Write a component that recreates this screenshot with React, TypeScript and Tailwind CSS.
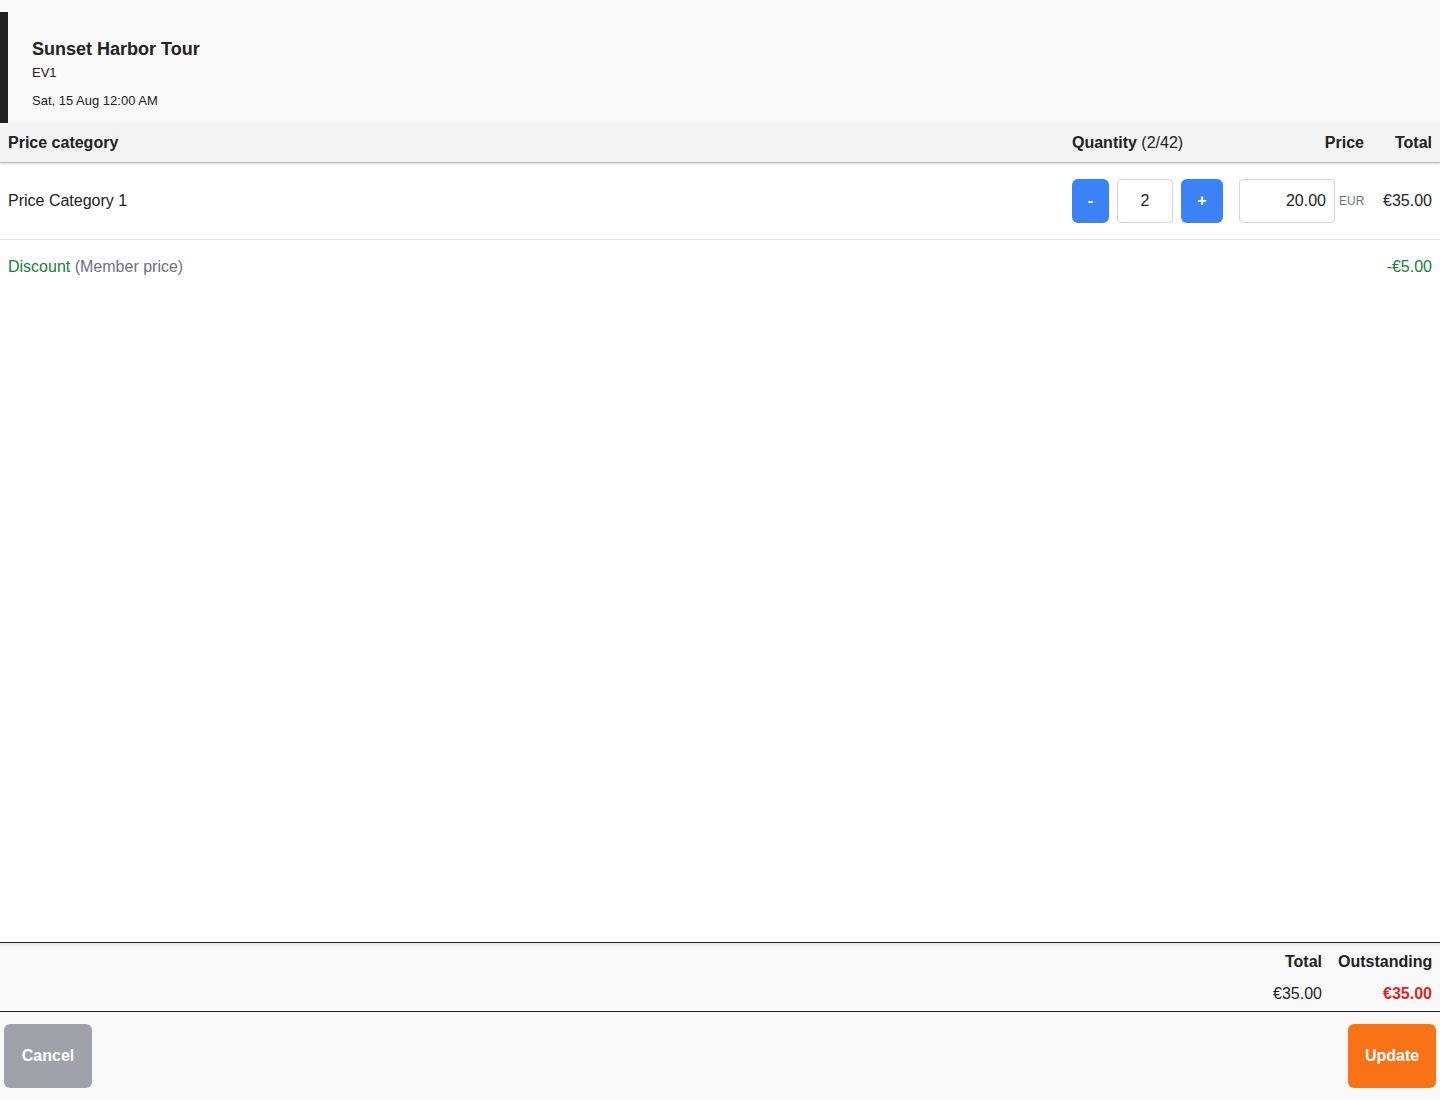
import { useState } from "react"

const font = { fontFamily: '"Liberation Sans", Arial, sans-serif' }

export default function App() {
  const [qty, setQty] = useState(2)
  const [price, setPrice] = useState("20.00")

  return (
    <div className="h-screen flex flex-col bg-white text-[#222] font-['Liberation_Sans',Arial,sans-serif]" style={font}>
      {/* event header */}
      <div className="bg-[#f9f9f9] pt-3">
        <div className="border-l-8 border-[#222] pl-6 pt-[26px] pb-[13px]">
          <h1 className="text-[18px] leading-[22px] font-bold">Sunset Harbor Tour</h1>
          <div className="mt-[4px] text-[13px] leading-[18px]">EV1</div>
          <div className="mt-[10px] text-[13px] leading-[18px]">Sat, 15 Aug 12:00 AM</div>
        </div>
      </div>

      {/* table head */}
      <div className="h-10 flex items-center px-2 bg-[#f3f3f3] border-b border-[#bdbdbd] shadow-sm text-[16px]">
        <div className="flex-1 font-bold">Price category</div>
        <div className="w-[151px]">
          <span className="font-bold">Quantity</span> (2/42)
        </div>
        <div className="ml-4 w-[125px] text-right font-bold">Price</div>
        <div className="w-[68px] text-right font-bold">Total</div>
      </div>

      {/* price category row */}
      <div className="h-[77px] flex items-center px-2 border-b border-[#e5e5e5] text-[16px]">
        <div className="flex-1">Price Category 1</div>
        <div className="w-[151px] flex items-center">
          <button
            className="w-[37px] h-11 rounded-md bg-[#3b82f6] text-white font-bold"
            onClick={() => setQty((q) => Math.max(0, q - 1))}
          >
            -
          </button>
          <input
            className="ml-2 w-14 h-11 rounded border border-[#d4d4d4] bg-white text-center outline-none"
            value={qty}
            onChange={(e) => setQty(Number(e.target.value) || 0)}
          />
          <button
            className="ml-2 w-[42px] h-11 rounded-md bg-[#3b82f6] text-white font-bold"
            onClick={() => setQty((q) => q + 1)}
          >
            +
          </button>
        </div>
        <div className="ml-4 w-[125px] flex items-center">
          <input
            className="w-24 h-11 rounded border border-[#d4d4d4] bg-white text-right pr-2 outline-none"
            value={price}
            onChange={(e) => setPrice(e.target.value)}
          />
          <span className="ml-1 text-[12px] text-[#6b7280]">EUR</span>
        </div>
        <div className="w-[68px] text-right">€35.00</div>
      </div>

      {/* discount */}
      <div className="h-[54px] flex items-center px-2 text-[16px]">
        <div className="flex-1">
          <span className="text-[#15803d]">Discount</span> <span className="text-[#6b7280]">(Member price)</span>
        </div>
        <div className="text-[#15803d]">-€5.00</div>
      </div>

      <div className="flex-1" />

      {/* totals */}
      <div className="border-t border-[#222] bg-[#f9f9f9] shadow-[inset_0_6px_6px_-6px_rgba(0,0,0,0.15)] px-2 pt-[9px] pb-[7px] text-[16px]">
        <div className="flex justify-end leading-5">
          <div className="font-bold text-right">Total</div>
          <div className="ml-4 w-[94px] font-bold text-right">Outstanding</div>
        </div>
        <div className="mt-3 flex justify-end leading-5">
          <div className="text-right">€35.00</div>
          <div className="ml-4 w-[94px] font-bold text-right text-[#dc2626]">€35.00</div>
        </div>
      </div>

      {/* actions */}
      <div className="border-t border-[#222] bg-[#f9f9f9] flex justify-between px-1 pt-3 pb-[12px]">
        <button className="w-[88px] h-16 rounded-md bg-[#a1a1aa] text-white font-bold text-[16px]">Cancel</button>
        <button className="w-[88px] h-16 rounded-md bg-[#f97316] text-white font-bold text-[16px]">Update</button>
      </div>
    </div>
  )
}
